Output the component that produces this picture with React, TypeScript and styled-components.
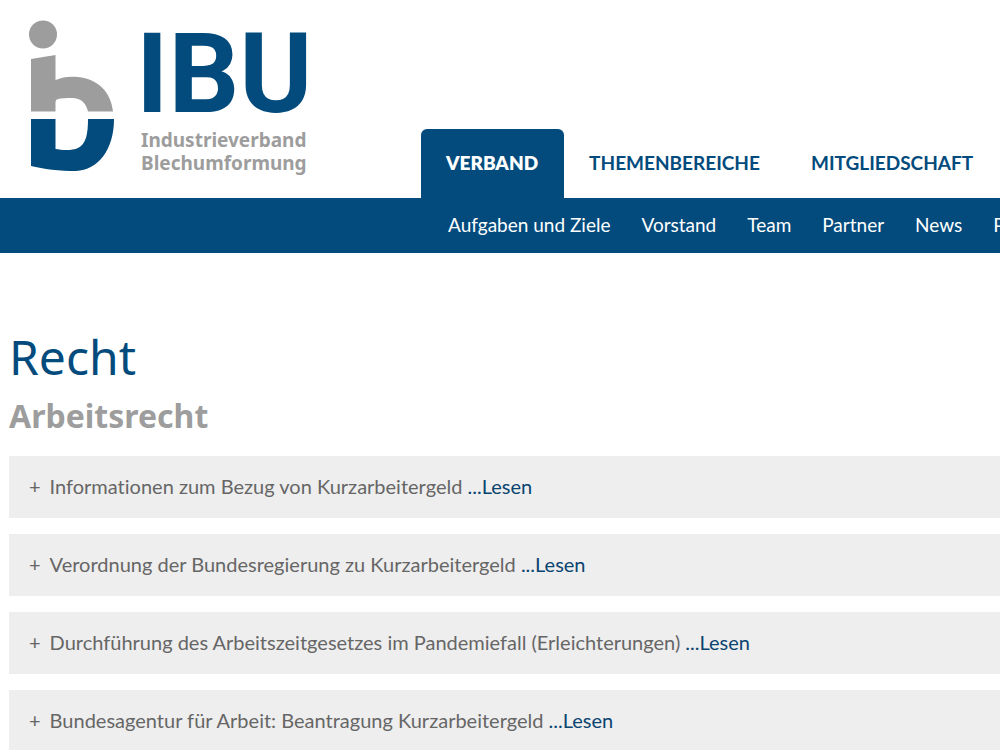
import React from "react";
import styled, { createGlobalStyle } from "styled-components";

const blue = "#034b7d";
const grey = "#9d9d9d";
const headingFont = `"Noto Sans", "Open Sans", sans-serif`;

const GlobalStyle = createGlobalStyle`
  *, *::before, *::after { box-sizing: border-box; }
  body {
    margin: 0;
    background: #fff;
    color: #666;
    font-family: Lato, "Open Sans", sans-serif;
    font-size: 20px;
    font-variant-ligatures: none;
    line-height: 30px;
    overflow-x: hidden;
  }
  a { color: inherit; text-decoration: none; }
`;

const Header = styled.header`
  display: flex;
  align-items: stretch;
  height: 198px;
  overflow: hidden;
`;

const Brand = styled.a`
  flex: 0 0 421px;
  padding: 20px 0 0 29px;
`;

const Logo = styled.svg`
  display: block;
  width: 290px;
  height: 160px;
  overflow: visible;
`;

const LogoName = styled.text`
  fill: ${blue};
  font-family: Roboto, sans-serif;
  font-size: 111px;
  font-weight: 700;
`;

const LogoLine = styled.text`
  fill: ${grey};
  font-family: ${headingFont};
  font-size: 19px;
  font-weight: 700;
`;

const MainNav = styled.nav`
  display: flex;
  align-items: flex-end;
`;

const MainLink = styled.a<{ $active?: boolean }>`
  padding: 19px 26px 21px 25px;
  border-radius: 6px 6px 0 0;
  background: ${(p) => (p.$active ? blue : "transparent")};
  color: ${(p) => (p.$active ? "#fff" : blue)};
  font-size: 19px;
  font-weight: ${(p) => (p.$active ? 800 : 700)};
  line-height: 29px;
  white-space: nowrap;
`;

const SubNav = styled.nav`
  display: flex;
  gap: 31px;
  padding: 12px 0 13px 448px;
  overflow: hidden;
  background: ${blue};
  color: #fff;
  font-size: 19px;
  white-space: nowrap;
`;

const Main = styled.main`
  padding: 75px 0 0 9px;
`;

const Title = styled.h1`
  margin: 0;
  color: ${blue};
  font-family: ${headingFont};
  font-size: 48px;
  font-weight: 400;
  line-height: 58px;
`;

const Subtitle = styled.h2`
  margin: 8px 0 19px;
  color: ${grey};
  font-family: ${headingFont};
  font-size: 32px;
  font-weight: 700;
  line-height: 43px;
`;

const Entries = styled.ul`
  display: flex;
  flex-direction: column;
  gap: 16px;
  margin: 0;
  padding: 0;
  list-style: none;
`;

const Entry = styled.li`
  display: flex;
  gap: 9px;
  padding: 15px 20px 17px;
  background: #eee;
  white-space: nowrap;
`;

const ReadLink = styled.a`
  color: #0a4470;
`;

const sections = ["VERBAND", "THEMENBEREICHE", "MITGLIEDSCHAFT"];
const pages = ["Aufgaben und Ziele", "Vorstand", "Team", "Partner", "News", "Presse"];
const entries = [
  "Informationen zum Bezug von Kurzarbeitergeld",
  "Verordnung der Bundesregierung zu Kurzarbeitergeld",
  "Durchführung des Arbeitszeitgesetzes im Pandemiefall (Erleichterungen)",
  "Bundesagentur für Arbeit: Beantragung Kurzarbeitergeld",
];

export default function App() {
  return (
    <>
      <GlobalStyle />
      <Header>
        <Brand href="#">
          <Logo viewBox="29 20 290 160">
            <circle cx="43" cy="34.5" r="14" fill={grey} />
            <path
              fill={grey}
              d="M31 59L55.5 55V80C62 77 70 76 78 77C98 79 111 92 113 111.500H88C86 103 81 98 72 98C66 98 61 98 58 99Q55.500 99.500 55.500 102V111.500H31Z"
            />
            <path
              fill={blue}
              d="M31 119H55.500V149C61 150 72 151 78 148C86 144 88 134 88 119H114C114 150 98 170 76 171C60 171 43 169 31 166Z"
            />
            <LogoName x="136" y="112">IBU</LogoName>
            <LogoLine x="141" y="147">Industrieverband</LogoLine>
            <LogoLine x="141" y="170">Blechumformung</LogoLine>
          </Logo>
        </Brand>
        <MainNav>
          {sections.map((s, i) => (
            <MainLink key={s} href="#" $active={i === 0}>{s}</MainLink>
          ))}
        </MainNav>
      </Header>
      <SubNav>
        {pages.map((p) => (
          <a key={p} href="#">{p}</a>
        ))}
      </SubNav>
      <Main>
        <Title>Recht</Title>
        <Subtitle>Arbeitsrecht</Subtitle>
        <Entries>
          {entries.map((e) => (
            <Entry key={e}>
              <span>+</span>
              <span>
                {e} <ReadLink href="#">...Lesen</ReadLink>
              </span>
            </Entry>
          ))}
        </Entries>
      </Main>
    </>
  );
}
